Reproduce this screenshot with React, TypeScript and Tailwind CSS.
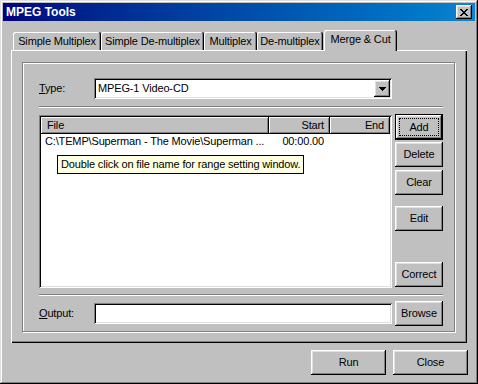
import React from 'react';

const raised =
  'shadow-[inset_-1px_-1px_0_#000,inset_1px_1px_0_#fff,inset_-2px_-2px_0_#808080,inset_2px_2px_0_#dfdfdf]';
const sunken =
  'shadow-[inset_1px_1px_0_#808080,inset_-1px_-1px_0_#fff,inset_2px_2px_0_#000,inset_-2px_-2px_0_#dfdfdf]';
const tabEdge =
  'shadow-[inset_-1px_0_0_#000,inset_1px_1px_0_#fff,inset_-2px_0_0_#808080]';
const headEdge =
  'shadow-[inset_-1px_-1px_0_#000,inset_1px_1px_0_#fff,inset_-2px_-2px_0_#808080]';

function Button({ label, className }: { label: string; className: string }) {
  return (
    <div className={`flex items-center justify-center bg-[#c0c0c0] ${raised} ${className}`}>
      {label}
    </div>
  );
}

function Separator() {
  return <div className="h-[2px] w-[404px] border-t border-t-[#808080] border-b border-b-white" />;
}

const tabs = [
  { label: 'Simple Multiplex', width: 'w-[88px]' },
  { label: 'Simple De-multiplex', width: 'w-[103px]' },
  { label: 'Multiplex', width: 'w-[53px]' },
  { label: 'De-multiplex', width: 'w-[66px]' },
];

export default function App() {
  return (
    <div
      className={`w-[478px] h-[384px] p-[3px] bg-[#c0c0c0] flex flex-col text-[11px] leading-none tracking-[-0.15px] text-black font-['Liberation_Sans',Arial,sans-serif] shadow-[inset_-1px_-1px_0_#000,inset_1px_1px_0_#dfdfdf,inset_-2px_-2px_0_#808080,inset_2px_2px_0_#fff]`}
    >
      {/* title bar */}
      <div className="h-[18px] flex items-center justify-between pl-[3px] pr-[3px] bg-linear-to-r from-[#000080] to-[#1084d0]">
        <span className="text-white font-bold text-[12px] tracking-normal">MPEG Tools</span>
        <div className={`w-[16px] h-[14px] bg-[#c0c0c0] flex items-center justify-center ${raised}`}>
          <svg width="8" height="7" viewBox="0 0 8 7" shapeRendering="crispEdges">
            <path
              d="M0 0h2v1H0zM6 0h2v1H6zM1 1h2v1H1zM5 1h2v1H5zM2 2h4v1H2zM3 3h2v1H3zM2 4h4v1H2zM1 5h2v1H1zM5 5h2v1H5zM0 6h2v1H0zM6 6h2v1H6z"
              fill="#000"
            />
          </svg>
        </div>
      </div>

      {/* tabs */}
      <div className="mt-[9px] ml-[8px] flex flex-col">
        <div className="flex items-end h-[20px] pl-[2px]">
          {tabs.map((t) => (
            <div
              key={t.label}
              className={`${t.width} h-[18px] flex items-center justify-center rounded-t-[2px] bg-[#c0c0c0] ${tabEdge}`}
            >
              {t.label}
            </div>
          ))}
          <div
            className={`relative z-10 ml-[1px] -mb-px w-[73px] h-[21px] pb-[2px] flex items-center justify-center rounded-t-[2px] bg-[#c0c0c0] ${tabEdge}`}
          >
            Merge &amp; Cut
          </div>
        </div>

        <div className="w-[456px] h-[293px] pt-[12px] pl-[11px] shadow-[inset_1px_1px_0_#fff,inset_-1px_-1px_0_#000,inset_-2px_-2px_0_#808080]">
          <div className="w-[433px] h-[270px] border border-[#808080] shadow-[1px_1px_0_#fff,inset_1px_1px_0_#fff] pl-[16px] pt-[15px] flex flex-col">
            {/* type */}
            <div className="flex items-center h-[21px]">
              <div className="w-[55px]">
                <u>T</u>ype:
              </div>
              <div className={`w-[298px] h-[21px] bg-white p-[2px] flex ${sunken}`}>
                <div className="flex-1 flex items-center pl-[2px]">MPEG-1 Video-CD</div>
                <div className={`w-[16px] h-[17px] bg-[#c0c0c0] flex items-center justify-center ${raised}`}>
                  <svg width="7" height="4" viewBox="0 0 7 4" shapeRendering="crispEdges">
                    <path d="M0 0h7v1H0zM1 1h5v1H1zM2 2h3v1H2zM3 3h1v1H3z" fill="#000" />
                  </svg>
                </div>
              </div>
            </div>

            <div className="mt-[7px]">
              <Separator />
            </div>

            {/* list + side buttons */}
            <div className="mt-[7px] flex items-start gap-[3px]">
              <div className={`relative w-[353px] h-[173px] bg-white p-[2px] flex flex-col ${sunken}`}>
                <div className="flex h-[17px] bg-[#c0c0c0]">
                  <div className={`w-[228px] flex items-center pl-[6px] ${headEdge}`}>File</div>
                  <div className={`w-[61px] flex items-center justify-end pr-[6px] ${headEdge}`}>Start</div>
                  <div className={`w-[60px] flex items-center justify-end pr-[6px] ${headEdge}`}>End</div>
                </div>
                <div className="flex h-[15px] items-center">
                  <div className="w-[228px] pl-[4px] whitespace-nowrap overflow-hidden">
                    {'C:\\TEMP\\Superman - The Movie\\Superman ...'}
                  </div>
                  <div className="w-[61px] text-right pr-[6px]">00:00.00</div>
                </div>
                <div className="absolute left-[18px] top-[40px] w-[247px] h-[19px] bg-[#ffffe1] border border-black flex items-center pl-[3px] whitespace-nowrap">
                  Double click on file name for range setting window.
                </div>
              </div>

              <div className="flex flex-col w-[48px] -mt-px">
                <div className="h-[26px] border border-black flex">
                  <div className={`flex-1 flex p-[3px] bg-[#c0c0c0] ${raised}`}>
                    <div className="flex-1 flex items-center justify-center border border-dotted border-black">
                      Add
                    </div>
                  </div>
                </div>
                <Button label="Delete" className="mt-[2px] h-[25px]" />
                <Button label="Clear" className="mt-[3px] h-[25px]" />
                <Button label="Edit" className="mt-[11px] h-[25px]" />
                <Button label="Correct" className="mt-[31px] h-[25px]" />
              </div>
            </div>

            <div className="mt-[6px]">
              <Separator />
            </div>

            {/* output */}
            <div className="mt-[5px] h-[25px] flex items-center">
              <div className="w-[55px]">
                <u>O</u>utput:
              </div>
              <div className={`w-[298px] h-[21px] bg-white ${sunken}`} />
              <Button label="Browse" className="ml-[3px] w-[48px] h-[25px]" />
            </div>
          </div>
        </div>
      </div>

      {/* dialog buttons */}
      <div className="mt-[7px] flex justify-end gap-[7px] pr-[7px]">
        <Button label="Run" className="w-[75px] h-[25px]" />
        <Button label="Close" className="w-[75px] h-[25px]" />
      </div>
    </div>
  );
}
